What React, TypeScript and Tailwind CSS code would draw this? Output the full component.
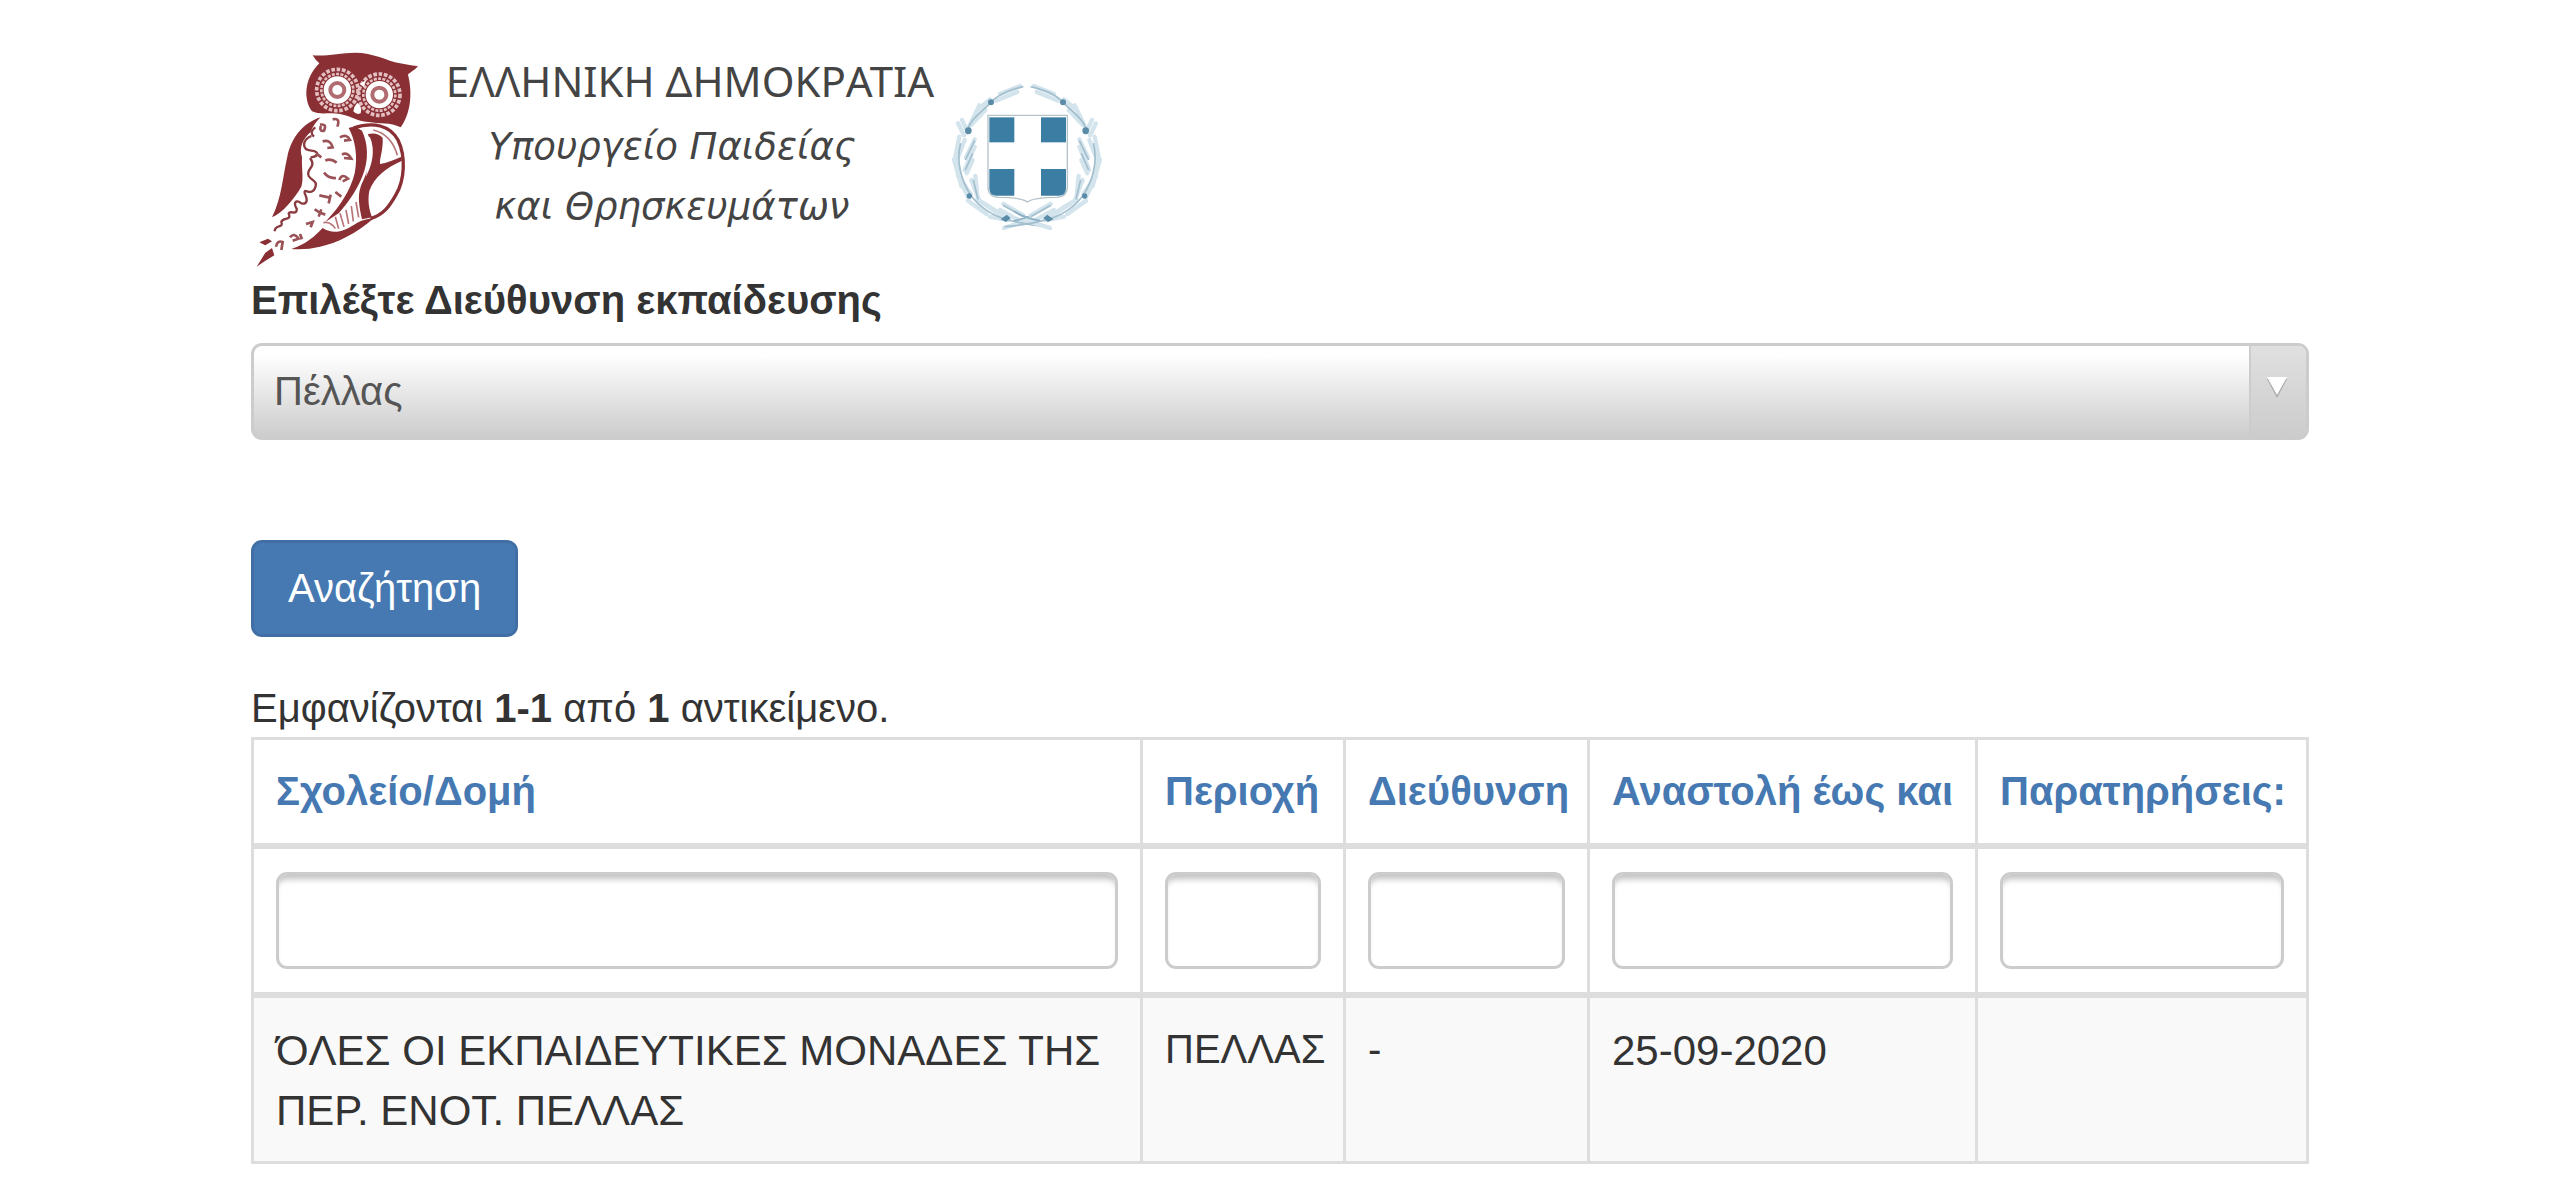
import { useState } from 'react';

const columns = [
  { id: 'school', label: 'Σχολείο/Δομή', width: '' },
  { id: 'area', label: 'Περιοχή', width: 'w-[203px]' },
  { id: 'office', label: 'Διεύθυνση', width: 'w-[244px]' },
  { id: 'until', label: 'Αναστολή έως και', width: 'w-[388px]' },
  { id: 'notes', label: 'Παρατηρήσεις:', width: 'w-[331px]' },
];

const rows = [
  {
    school: 'ΌΛΕΣ ΟΙ ΕΚΠΑΙΔΕΥΤΙΚΕΣ ΜΟΝΑΔΕΣ ΤΗΣ ΠΕΡ. ΕΝΟΤ. ΠΕΛΛΑΣ',
    area: 'ΠΕΛΛΑΣ',
    office: '-',
    until: '25-09-2020',
    notes: '',
  },
];

function OwlLogo() {
  return (
    <svg viewBox="33 0 567 690" className="h-[230px] w-[189px] shrink-0" fill="none" aria-hidden="true">
      {/* head */}
      <path
        d="M218 46 C260 50 300 38 345 38 C400 38 440 62 480 70 Q510 76 534 79 C520 94 508 98 504 104 C516 150 516 215 482 262 C450 246 420 252 385 246 C350 244 335 228 300 222 C270 216 240 226 216 214 C190 180 192 115 238 70 Q226 60 218 46Z"
        fill="#8a2f34"
      />
      <g stroke="#e3bfc1">
        <circle cx="292" cy="150" r="62" strokeWidth="11" strokeDasharray="11 5" />
        <circle cx="292" cy="150" r="48" strokeWidth="8" strokeDasharray="9 4" />
        <circle cx="418" cy="164" r="62" strokeWidth="11" strokeDasharray="11 5" />
        <circle cx="418" cy="164" r="48" strokeWidth="8" strokeDasharray="9 4" />
      </g>
      <g fill="#b06c70" stroke="#fff" strokeWidth="14">
        <circle cx="292" cy="150" r="34" />
        <circle cx="418" cy="164" r="34" />
      </g>
      <g fill="#fff">
        <circle cx="292" cy="150" r="15" />
        <circle cx="418" cy="164" r="15" />
        <path d="M352 188 Q368 200 362 220 Q350 226 340 214 Q342 198 352 188Z" />
        <path d="M360 132 L378 120 L372 142Z" />
      </g>
      {/* left wing and tail */}
      <g fill="#8a2f34">
        <path d="M242 232 C190 248 154 292 142 350 C128 410 126 470 96 532 C128 518 160 480 184 440 C192 418 184 380 186 352 C176 320 190 296 212 276 Q222 250 242 232Z" />
        <path d="M154 627 C200 612 222 590 248 564 C280 584 310 576 352 548 Q372 538 402 534 C350 580 290 610 240 620 Q200 630 154 627Z" />
        <path d="M50 680 L76 638 L96 624 L103 646 L74 664Z" />
        <path d="M58 607 L84 596 L96 604 L76 616Z" />
        {/* breast band */}
        <path d="M326 264 Q346 256 366 272 C384 310 388 360 366 412 C346 460 320 492 296 520 L256 546 C300 500 332 450 344 400 C354 350 346 300 326 264Z" />
        <path d="M384 282 Q414 276 428 294 C430 330 418 356 420 372 Q450 366 484 350 L486 362 C440 382 404 410 388 452 C382 484 388 510 396 532 L366 538 C358 500 352 470 362 440 C380 400 404 350 384 282Z" />
      </g>
      <path d="M390 292 C406 330 398 372 378 410 C386 360 388 320 374 284Z" fill="#fff" />
      {/* right wing outline */}
      <path d="M340 264 C400 244 450 256 474 300 C498 350 494 420 468 464 C448 500 430 524 392 536" stroke="#8a2f34" strokeWidth="10" />
      <path d="M400 270 C440 280 462 310 472 346" stroke="#b87579" strokeWidth="5" />
      {/* braid along the wing */}
      <path
        d="M226 262 Q206 276 222 290 M214 288 C186 300 184 330 214 332 C240 334 236 350 212 352 M210 354 C232 384 196 384 206 408 C216 424 236 422 224 446 C212 470 190 440 194 460 C204 480 202 494 184 490 C166 476 160 490 170 506 C172 528 150 510 146 520 C156 544 128 530 124 546 C132 566 104 552 104 574"
        stroke="#8a3b40"
        strokeWidth="7"
      />
      {/* feather speckles */}
      <path
        d="M240 254 Q262 250 252 272 Q238 276 242 258 M278 238 Q302 232 292 260 M248 304 Q272 298 278 322 L262 324 M300 292 Q320 280 330 300 L312 302 M306 344 Q322 334 334 356 L312 354 M256 362 Q272 354 290 368 M228 340 L244 352 M298 420 Q306 398 324 416 L308 424 M252 398 Q266 416 288 414 M238 466 L266 472 M266 490 L272 464 M286 456 L304 470 M224 508 Q238 520 256 524 M236 530 L244 508 M198 552 L218 546 L212 562 M150 592 Q162 576 176 596 L158 602 M108 620 Q112 600 128 606 L124 630 M180 582 L186 598"
        stroke="#9a5256"
        strokeWidth="8"
      />
      <path
        d="M300 520 L312 560 M318 510 L326 552 M334 498 L340 544 M348 486 L356 532 M250 548 Q272 544 286 566 M286 530 L296 566"
        stroke="#b87579"
        strokeWidth="5"
      />
    </svg>
  );
}

function Emblem() {
  return (
    <svg viewBox="0 0 540 510" className="mt-[30px] h-[170px] w-[180px] shrink-0" fill="none" aria-hidden="true">
      {/* laurel branches, the right one mirrored */}
      {['', 'translate(522 0) scale(-1 1)'].map((transform) => (
        <g key={transform} transform={transform || undefined}>
          <path
            d="M240 48 L180 72 M232 66 L168 92 M150 88 L112 120 M136 120 L94 164 M118 106 L88 168 M66 150 L84 188 M72 196 L54 160 M58 200 L46 260 L58 310 M74 210 L50 272 M104 208 L78 262 M104 230 L74 300 M98 270 L80 310 M42 268 L64 348 M54 318 L92 372 M106 318 L112 376 M94 330 L118 392 M66 344 L86 384 M84 392 L140 432 M112 388 L176 428 M130 400 L190 440 M150 440 L206 450 M190 402 L250 436 M180 420 L240 452 M192 474 L262 452"
            stroke="#d3e4ed"
            strokeWidth="13"
            strokeLinecap="round"
          />
          <path
            d="M250 50 C205 60 165 80 145 105 C105 140 85 160 80 190 M62 220 C48 270 62 330 92 375 C120 415 165 440 200 448 Q260 466 328 470 M104 212 L76 270 M98 250 L76 300 M100 330 L114 388 M190 406 L250 440"
            stroke="#a3bfce"
            strokeWidth="5"
          />
          <path d="M222 452 Q262 446 300 424" stroke="#8eb2c5" strokeWidth="5" />
          <g fill="#5a8ca8">
            <circle cx="153" cy="97" r="9" />
            <circle cx="85" cy="182" r="10" />
            <circle cx="88" cy="378" r="8" />
            <path d="M182 448 L200 434 L212 444 L198 456Z" />
          </g>
        </g>
      ))}
      {/* shield */}
      <path d="M144 136 H382 V350 Q382 380 350 382 Q280 382 262 396 Q244 382 176 382 Q144 380 144 350Z" fill="#fff" stroke="#b4c3ca" strokeWidth="4" />
      <g fill="#3c7da3">
        <path d="M148 142 H223 V217 H148Z" />
        <path d="M303 142 H378 V217 H303Z" />
        <path d="M148 297 H223 V377 H168 Q148 376 148 354Z" />
        <path d="M303 297 H378 V354 Q378 376 358 377 H303Z" />
      </g>
    </svg>
  );
}

export default function App() {
  const [office, setOffice] = useState('Πέλλας');

  return (
    <main className="min-h-screen bg-white px-[251px] pt-10 pb-5 font-['Liberation_Sans',Arial,sans-serif] text-[40px] leading-[57px] text-[#333]">
      <header className="mb-[2px] flex items-start">
        <OwlLogo />
        <div className="flex w-[500px] shrink-0 flex-col items-center pt-3 text-center whitespace-nowrap text-[#444]">
          <p className="font-['Noto_Sans',sans-serif] text-[42px] leading-[57px]">ΕΛΛΗΝΙΚΗ ΔΗΜΟΚΡΑΤΙΑ</p>
          <div className="mt-2 pr-9 font-['DejaVu_Sans',sans-serif] text-[37px] leading-[60px] italic">
            <p>Υπουργείο Παιδείας</p>
            <p>και Θρησκευμάτων</p>
          </div>
        </div>
        <Emblem />
      </header>

      <form onSubmit={(e) => e.preventDefault()}>
        <label htmlFor="office" className="mb-[14px] block font-bold">
          Επιλέξτε Διεύθυνση εκπαίδευσης
        </label>
        <div className="relative">
          <select
            id="office"
            value={office}
            onChange={(e) => setOffice(e.target.value)}
            className="block h-[97px] w-full appearance-none rounded-[11px] border-[3px] border-[#ccc] bg-linear-to-b from-white from-10% to-[#ccc] pr-20 pl-5 text-[#555]"
          >
            <option>Πέλλας</option>
          </select>
          <span className="pointer-events-none absolute inset-y-[3px] right-[3px] flex w-[57px] justify-center rounded-r-lg border-l-2 border-[#ccc] bg-linear-to-b from-[#e0e0e0] to-[#ccc] pt-[31px] pr-1">
            <svg viewBox="0 0 20 21" className="h-[21px] w-5" aria-hidden="true">
              <path d="M0 2 H20 L10 21Z" fill="#aaa" />
              <path d="M0 0 H20 L10 18Z" fill="#fff" />
            </svg>
          </span>
        </div>
        <button
          type="submit"
          className="mt-[100px] block h-[97px] rounded-[11px] border-[3px] border-[#416ea5] bg-[#4679b2] px-[34px] text-white"
        >
          Αναζήτηση
        </button>
      </form>

      <p className="mt-[43px]">
        Εμφανίζονται <b>1-1</b> από <b>1</b> αντικείμενο.
      </p>

      <table className="w-full table-fixed border-collapse border-[3px] border-[#ddd]">
        <thead>
          <tr>
            {columns.map((col) => (
              <th key={col.id} className={`${col.width} border-[3px] border-b-[6px] border-[#ddd] px-[22px] py-[23px] text-left whitespace-nowrap`}>
                <a href={`#${col.id}`} className="text-[#4679b2]">
                  {col.label}
                </a>
              </th>
            ))}
          </tr>
          <tr>
            {columns.map((col) => (
              <td key={col.id} className="border-[3px] border-b-[6px] border-[#ddd] px-[22px] py-[23px]">
                <input
                  type="text"
                  aria-label={col.label}
                  className="block h-[97px] w-full rounded-[11px] border-[3px] border-[#ccc] bg-white px-5 shadow-[inset_0_8px_6px_-4px_rgba(0,0,0,0.25)]"
                />
              </td>
            ))}
          </tr>
        </thead>
        <tbody>
          {rows.map((row) => (
            <tr key={row.school} className="bg-[#f9f9f9] align-top">
              <td className="border-[3px] border-[#ddd] px-[22px] pt-[23px] pb-5 text-[42px] leading-[60px]">{row.school}</td>
              <td className="border-[3px] border-[#ddd] px-[22px] pt-[23px] pb-5">{row.area}</td>
              <td className="border-[3px] border-[#ddd] px-[22px] pt-[23px] pb-5">{row.office}</td>
              <td className="border-[3px] border-[#ddd] px-[22px] pt-[23px] pb-5 text-[42px] leading-[60px]">{row.until}</td>
              <td className="border-[3px] border-[#ddd] px-[22px] pt-[23px] pb-5">{row.notes}</td>
            </tr>
          ))}
        </tbody>
      </table>
    </main>
  );
}
